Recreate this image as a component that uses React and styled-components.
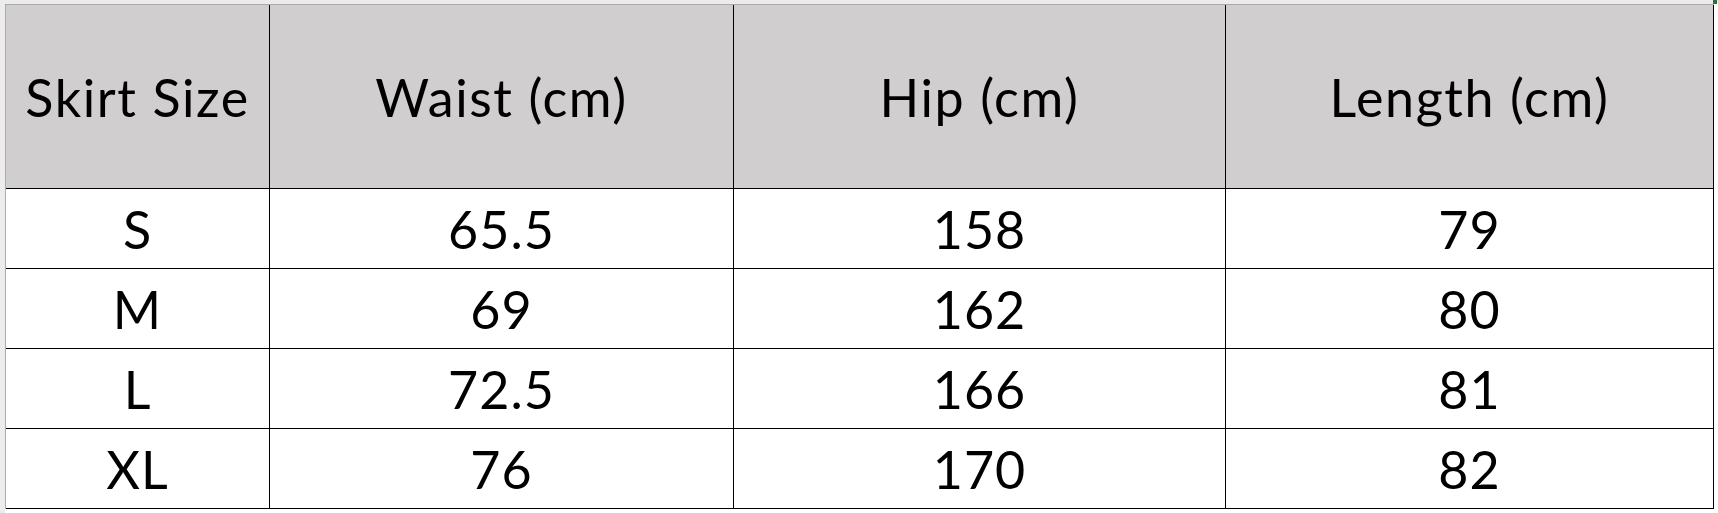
import React from "react";
import styled, { createGlobalStyle } from "styled-components";

const Global = createGlobalStyle`
  html, body { margin: 0; padding: 0; background: #ffffff; }
  body { font-family: Lato, "Open Sans", sans-serif; }
`;

const Frame = styled.div`
  width: 1718px;
  height: 513px;
  box-sizing: border-box;
  padding: 4px 0 0 5px;
  background: linear-gradient(#ececec, #ececec) left top / 5px 100% no-repeat,
    linear-gradient(#ececec, #ececec) left top / 100% 4px no-repeat, #fff;
  position: relative;
`;

const Handle = styled.span`
  position: absolute;
  top: 0;
  right: 1px;
  width: 4px;
  height: 4px;
  background: #217346;
`;

const Sheet = styled.div`
  display: grid;
  grid-template-columns: 264px 464px 492px 488px;
  grid-template-rows: 184px repeat(4, 80px);
  border-left: 1px solid #ababab;
  border-top: 1px solid #ababab;
  width: max-content;
`;

const Cell = styled.div`
  display: flex;
  align-items: center;
  justify-content: center;
  box-sizing: border-box;
  border-right: 1.5px solid #000;
  border-bottom: 1.5px solid #000;
  background: ${(p) => (p.$head ? "#d0cecf" : "#ffffff")};
  color: #000;
  font-size: 52px;
  letter-spacing: ${(p) => (p.$head ? "1.6px" : "1px")};
  line-height: 1;
  white-space: nowrap;
`;

const headers = ["Skirt Size", "Waist (cm)", "Hip (cm)", "Length (cm)"];
const rows = [
  ["S", "65.5", "158", "79"],
  ["M", "69", "162", "80"],
  ["L", "72.5", "166", "81"],
  ["XL", "76", "170", "82"],
];

export default function App() {
  return (
    <>
      <Global />
      <Frame>
        <Handle />
        <Sheet>
          {headers.map((h) => (
            <Cell key={h} $head>
              {h}
            </Cell>
          ))}
          {rows.map((r, i) =>
            r.map((v, j) => <Cell key={`${i}-${j}`}>{v}</Cell>)
          )}
        </Sheet>
      </Frame>
    </>
  );
}
